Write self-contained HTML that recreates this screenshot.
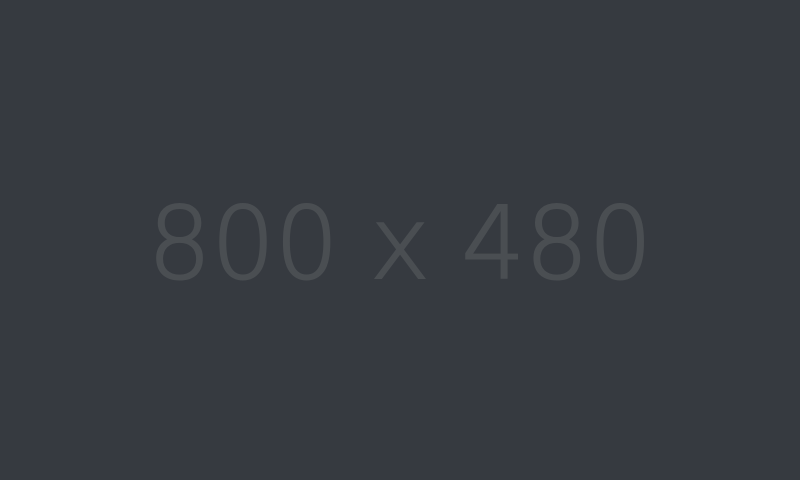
<!DOCTYPE html>
<html><head><style>
html,body{margin:0;padding:0;width:800px;height:480px;background:#363a40;overflow:hidden}
.t{position:absolute;left:0;top:0;width:800px;height:480px;display:flex;align-items:center;justify-content:center;font-family:"DejaVu Sans",sans-serif;font-weight:300;font-size:100px;color:#4a4e52;-webkit-text-stroke:2px #4a4e52;line-height:1;padding-top:8px;box-sizing:border-box}
</style></head><body><div class="t">800 x 480</div></body></html>
